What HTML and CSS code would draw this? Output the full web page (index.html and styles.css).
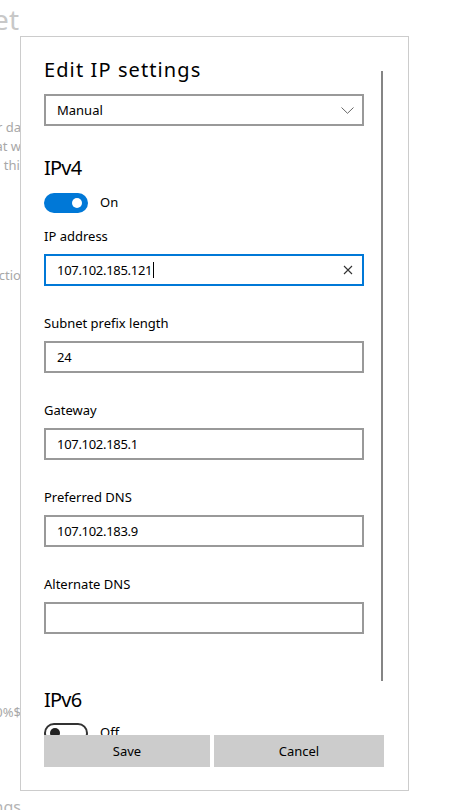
FILE: index.html
```html
<!DOCTYPE html>
<html lang="en">
<head>
<meta charset="utf-8">
<title>Edit IP settings</title>
<link rel="stylesheet" href="styles.css">
</head>
<body>
<div class="page">
  <div class="bg">
    <div class="bg-line bg-title">Ethernet</div>
    <div class="bg-line bg-t1">Allow your PC to be discoverable for your da</div>
    <div class="bg-line bg-t2">by other devices on this network. Network that w</div>
    <div class="bg-line bg-t3">We recommend turning this</div>
    <div class="bg-line bg-t4">Set as metered connectio</div>
    <div class="bg-line bg-t5">IPv4 address 10.0.0.0%$</div>
    <div class="bg-line bg-t6">Related settings</div>
  </div>

  <div class="dialog">
    <div class="scroll">
      <h1 class="title">Edit IP settings</h1>
      <div class="select">
        <span>Manual</span>
        <svg class="chevron" width="13" height="7" viewBox="0 0 13 7"><path d="M0.5 0.5 L6.5 6.3 L12.5 0.5" fill="none" stroke="#666" stroke-width="1"/></svg>
      </div>

      <h2 class="section ipv4">IPv4</h2>
      <div class="toggle-row">
        <span class="toggle on"><span class="knob"></span></span>
        <span class="toggle-label">On</span>
      </div>

      <div class="field first">
        <div class="label">IP address</div>
        <div class="input focus">
          <span class="value">107.102.185.121</span><span class="caret"></span>
          <svg class="clear" width="10" height="10" viewBox="0 0 10 10"><path d="M1 1 L9 9 M9 1 L1 9" stroke="#333" stroke-width="1.1" fill="none"/></svg>
        </div>
      </div>
      <div class="field">
        <div class="label">Subnet prefix length</div>
        <div class="input"><span class="value">24</span></div>
      </div>
      <div class="field">
        <div class="label">Gateway</div>
        <div class="input"><span class="value">107.102.185.1</span></div>
      </div>
      <div class="field">
        <div class="label">Preferred DNS</div>
        <div class="input"><span class="value">107.102.183.9</span></div>
      </div>
      <div class="field">
        <div class="label">Alternate DNS</div>
        <div class="input"><span class="value"></span></div>
      </div>

      <h2 class="section ipv6">IPv6</h2>
      <div class="toggle-row off-row">
        <span class="toggle off"><span class="knob"></span></span>
        <span class="toggle-label">Off</span>
      </div>

      <div class="scrollbar"></div>
    </div>
    <div class="buttons">
      <button class="btn save">Save</button>
      <button class="btn cancel">Cancel</button>
    </div>
  </div>
</div>
</body>
</html>
```

FILE: styles.css
```css
html, body {
  margin: 0;
  padding: 0;
  background: #fff;
  width: 469px;
  height: 810px;
  overflow: hidden;
  font-family: "Noto Sans", "Open Sans", sans-serif;
  color: #000;
}

.page {
  position: relative;
  width: 469px;
  height: 810px;
  overflow: hidden;
}

/* background settings page, mostly hidden under the dialog */
.bg {
  display: flex;
  flex-direction: column;
  width: 30px;
}

.bg-line {
  display: flex;
  justify-content: flex-end;
  white-space: nowrap;
  overflow: hidden;
  width: 21px;
  color: #a8a8a8;
  font-size: 13px;
  line-height: 19px;
}

.bg-title {
  font-size: 28px;
  line-height: 36px;
  color: #c8c8c8;
  margin-top: 1px;
  width: 19px;
}

.bg-t1 { margin-top: 81px; }
.bg-t2 { margin-top: 0; }
.bg-t3 { margin-top: 0; width: 26px; }
.bg-t4 { margin-top: 91px; }
.bg-t5 { margin-top: 418px; }
.bg-t6 { margin-top: 76px; font-size: 16px; color: #b4b4b4; }

/* dialog */
.dialog {
  position: absolute;
  left: 20px;
  top: 36px;
  width: 387px;
  height: 753px;
  border: 1px solid #cccccc;
  background: #fff;
  display: flex;
  flex-direction: column;
}

.scroll {
  position: relative;
  height: 698px;
  overflow: hidden;
  padding: 19px 0 0 23px;
  box-sizing: border-box;
}

.title {
  margin: 0;
  font-size: 20px;
  line-height: 28px;
  font-weight: 400;
  letter-spacing: 1.1px;
}

.select {
  margin-top: 10px;
  width: 320px;
  height: 32px;
  box-sizing: border-box;
  border: 2px solid #999999;
  display: flex;
  align-items: center;
  justify-content: space-between;
  padding: 0 8px 0 11px;
  font-size: 13px;
}

.chevron {
  margin-top: 1px;
}

.section {
  margin: 0;
  font-size: 20px;
  line-height: 28px;
  font-weight: 400;
  letter-spacing: -0.8px;
}

.ipv4 { margin-top: 28px; }
.ipv6 { margin-top: 52px; }

.toggle-row {
  display: flex;
  align-items: center;
  gap: 12px;
  height: 20px;
  font-size: 13px;
  margin-top: 11px;
}

.toggle-label {
  margin-top: -2px;
}

.off-row { margin-top: 9px; }

.toggle {
  width: 44px;
  height: 20px;
  box-sizing: border-box;
  border-radius: 10px;
  display: flex;
  align-items: center;
}

.toggle.on {
  background: #0078d7;
  justify-content: flex-end;
  padding-right: 6px;
}

.toggle.on .knob {
  width: 10px;
  height: 10px;
  border-radius: 50%;
  background: #fff;
}

.toggle.off {
  border: 2px solid #333;
  padding-left: 4px;
}

.toggle.off .knob {
  width: 10px;
  height: 10px;
  border-radius: 50%;
  background: #222;
}

.field {
  margin-top: 27px;
}

.field.first {
  margin-top: 13px;
}

.label {
  font-size: 13px;
  line-height: 20px;
}

.input {
  margin-top: 8px;
  width: 320px;
  height: 32px;
  box-sizing: border-box;
  border: 2px solid #999999;
  display: flex;
  align-items: center;
  padding: 0 8px 0 11px;
  font-size: 13px;
  letter-spacing: -0.3px;
}

.input.focus {
  border-color: #0078d7;
}

.caret {
  width: 1px;
  height: 16px;
  background: #000;
  margin-left: 1px;
}

.clear {
  margin-left: auto;
  margin-right: 1px;
}

.scrollbar {
  position: absolute;
  left: 360px;
  top: 34px;
  width: 2px;
  height: 610px;
  background: #858585;
}

.buttons {
  display: grid;
  grid-template-columns: 166px 170px;
  gap: 4px;
  padding-left: 23px;
}

.btn {
  height: 32px;
  border: none;
  background: #cccccc;
  font-family: "Noto Sans", "Open Sans", sans-serif;
  font-size: 13px;
  color: #000;
  padding: 0;
}
```
